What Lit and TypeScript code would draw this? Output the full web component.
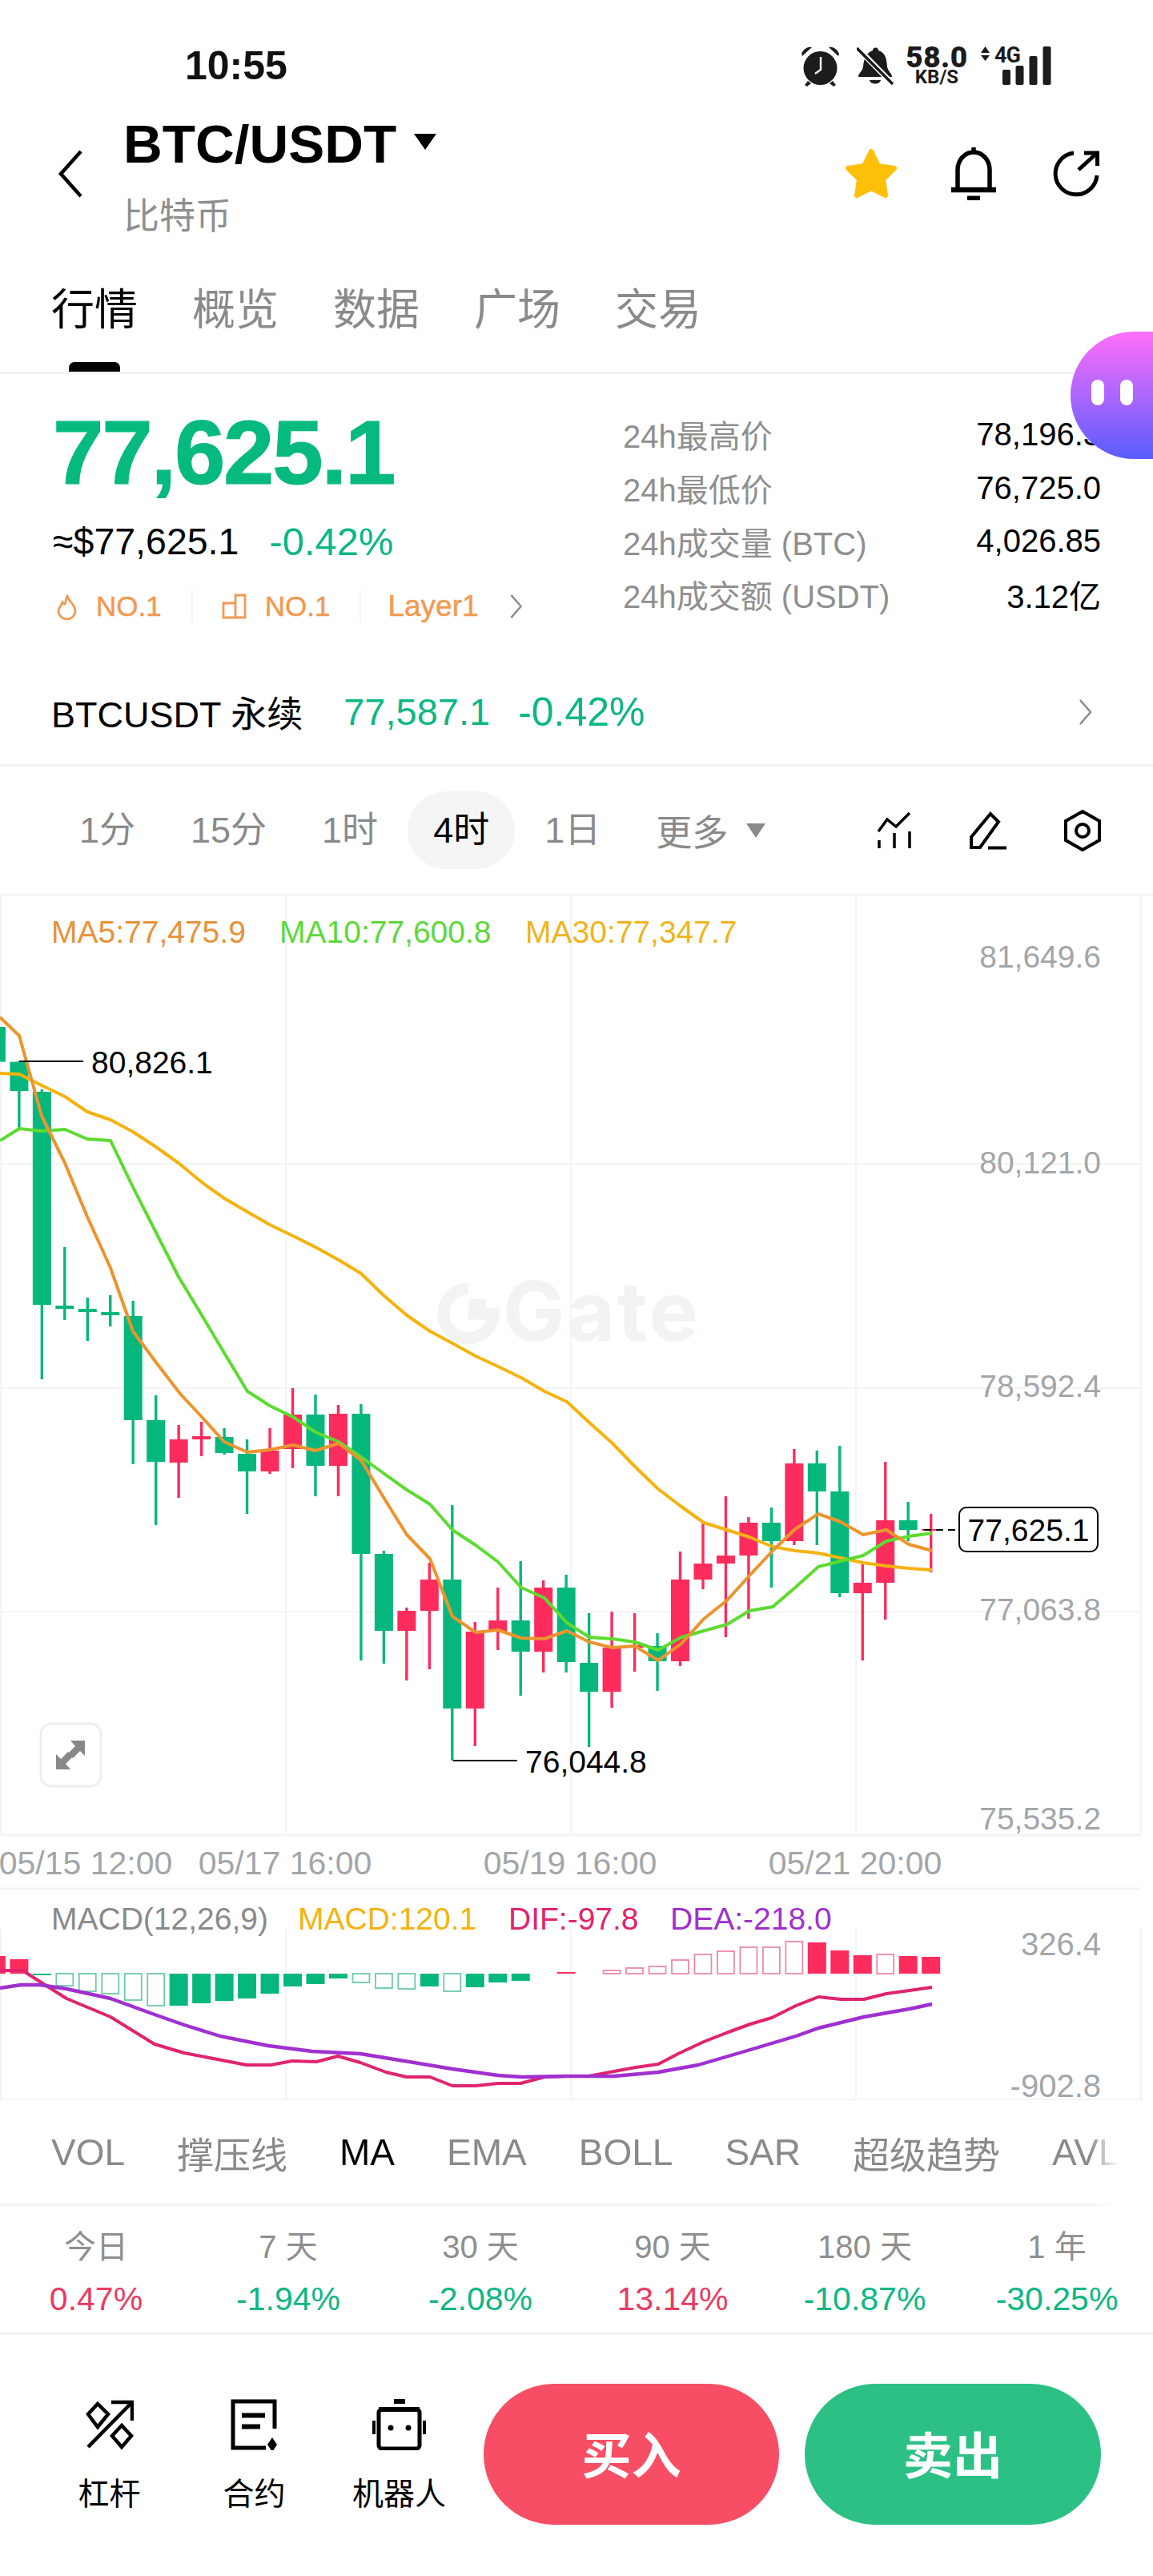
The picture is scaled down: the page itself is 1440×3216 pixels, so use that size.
import { LitElement, html, svg, css } from "lit";
import { customElement } from "lit/decorators.js";

type C = [number, number, number, number, "g" | "r"];
// wick top, wick bottom, body top, body bottom, colour
const CANDLES: C[] = [
  [1270, 1340, 1282, 1325.6, "g"], [1325, 1408, 1325.6, 1362, "g"], [1360, 1722, 1363, 1629, "g"],
  [1557, 1648, 1630, 1634, "g"], [1620, 1674, 1634, 1638, "g"], [1617, 1656, 1638, 1642, "g"],
  [1624, 1828, 1643, 1773, "g"], [1742, 1904, 1773, 1825, "g"], [1779, 1870, 1797, 1826, "r"],
  [1775, 1818, 1793, 1797, "r"], [1783, 1816, 1794, 1814, "g"], [1797, 1890, 1815, 1837, "g"],
  [1783, 1840, 1811, 1837, "r"], [1733, 1833, 1766, 1809, "r"], [1741, 1868, 1766, 1830, "g"],
  [1754, 1868, 1765, 1830, "r"], [1753, 2073, 1765, 1940, "g"], [1936, 2077, 1940, 2036, "g"],
  [2007, 2098, 2011, 2036, "r"], [1951, 2084, 1972, 2011, "r"], [1879, 2198, 1972, 2133, "g"],
  [2025, 2180, 2037, 2133, "r"], [1982, 2060, 2023, 2037, "r"], [1949, 2117, 2023, 2062, "g"],
  [1973, 2088, 1982, 2062, "r"], [1966, 2088, 1982, 2075, "g"], [2014, 2181, 2076, 2112, "g"],
  [2012, 2132, 2057, 2112, "r"], [2014, 2087, 2054, 2057, "r"], [2039, 2111, 2055, 2074, "g"],
  [1937, 2080, 1972, 2074, "r"], [1902, 1984, 1952, 1972, "r"], [1868, 2044, 1942, 1952, "r"],
  [1894, 2021, 1901, 1942, "r"], [1882, 1982, 1901, 1924, "g"], [1809, 1929, 1827, 1924, "r"],
  [1811, 1929, 1827, 1862, "g"], [1805, 1994, 1862, 1989, "g"], [1953, 2073, 1976, 1989, "r"],
  [1825, 2022, 1898, 1976, "r"], [1875, 1924, 1898, 1910, "g"], [1890, 1963, 1909, 1911, "r"],
];
const cx = (i: number) => -4.6 + 28.47 * i;

const MA5 = "0,1270 24,1293 52,1393 81,1452 109,1519 138,1583 166,1662 195,1701 225,1740 252,1769 280,1800 309,1813 337,1810 366,1804 394,1811 423,1802 451,1823 480,1871 508,1916 537,1946 565,2018 594,2038 622,2035 651,2045 680,2046 708,2036 736,2050 765,2057 793,2055 822,2073 851,2052 879,2021 908,1998 936,1967 965,1936 993,1909 1022,1890 1050,1900 1078,1916 1107,1910 1135,1928 1164,1936";
const MA10 = "0,1424 24,1409 52,1412 81,1410 109,1422 138,1424 166,1482 195,1539 223,1594 252,1642 280,1689 309,1737 337,1755 366,1769 394,1788 423,1800 451,1819 480,1840 508,1860 537,1878 565,1910 594,1929 622,1950 651,1982 680,1995 708,2026 736,2044 765,2046 793,2050 822,2060 851,2044 879,2036 908,2028 936,2011 965,2006 993,1982 1022,1956 1050,1949 1078,1942 1107,1924 1135,1918 1164,1914";
const MA30 = "0,1340 24,1341 52,1355 81,1369 109,1388 138,1398 166,1413 195,1432 223,1452 252,1476 280,1496 309,1513 337,1529 366,1543 394,1557 423,1573 451,1590 480,1618 508,1642 537,1662 565,1677 594,1693 622,1706 651,1720 680,1737 708,1750 736,1776 765,1802 793,1831 822,1859 851,1881 879,1901 908,1910 936,1919 965,1931 993,1936 1022,1939 1050,1945 1078,1951 1107,1955 1135,1958 1164,1960";
const DIF = "0,2460 28,2460 83,2495 138,2518 193,2552 230,2563 308,2578 338,2578 365,2573 395,2574 422,2567 450,2575 482,2587 508,2593 537,2593 565,2604 594,2604 622,2601 650,2601 680,2593 707,2592 735,2592 767,2586 794,2581 822,2577 849,2563 879,2549 907,2538 937,2527 964,2519 994,2504 1022,2493 1050,2496 1079,2496 1107,2489 1136,2485 1164,2481";
const DEA = "0,2482 26,2478 50,2478 83,2483 138,2495 193,2515 230,2528 275,2542 335,2554 390,2561 450,2564 505,2573 565,2583 622,2591 652,2593 707,2592 767,2592 822,2587 872,2578 937,2559 994,2542 1022,2532 1079,2518 1136,2508 1164,2502";

// index, end y (from baseline 2464), hollow
const BARS: [number, number, boolean][] = [
  [0, 2442, false], [1, 2446, false], [2, 2466, false], [3, 2479, true], [4, 2486, true], [5, 2489, true],
  [6, 2497, true], [7, 2504, true], [8, 2504, false], [9, 2501, false], [10, 2498, false], [11, 2495, false],
  [12, 2489, false], [13, 2480, false], [14, 2477, false], [15, 2470, false], [16, 2475, true], [17, 2482, true],
  [18, 2483, true], [19, 2480, false], [20, 2486, true], [21, 2481, false], [22, 2475, false], [23, 2473, false],
  [25, 2462, false], [27, 2460, true], [28, 2457, true], [29, 2455, true], [30, 2447, true], [31, 2440, true],
  [32, 2436, true], [33, 2431, true], [34, 2431, true], [35, 2424, true], [36, 2425, false], [37, 2435, false],
  [38, 2441, false], [39, 2440, true], [40, 2442, false], [41, 2443, false],
];

const STATS = [
  ["24h最高价", "78,196.3"], ["24h最低价", "76,725.0"],
  ["24h成交量 (BTC)", "4,026.85"], ["24h成交额 (USDT)", "3.12亿"],
];
const PERIODS: [string, string, boolean][] = [
  ["今日", "0.47%", true], ["7 天", "-1.94%", false], ["30 天", "-2.08%", false],
  ["90 天", "13.14%", true], ["180 天", "-10.87%", false], ["1 年", "-30.25%", false],
];

@customElement("app-root")
export class AppRoot extends LitElement {
  static styles = css`
    :host { display: block; width: 1440px; height: 3216px; background: #fff; overflow: hidden; position: relative;
      font-family: "Liberation Sans", "Noto Sans CJK SC", sans-serif; color: #000; }
    svg { display: block; flex: none; }
    .status { height: 130px; display: flex; padding: 58px 127px 0 231px; box-sizing: border-box; color: #1c1c1c; }
    .time { font-size: 50px; font-weight: 700; line-height: 48px; color: #111; }
    .st-right { margin-left: auto; display: flex; align-items: flex-start; }
    .speed { margin-left: 15px; width: 78px; display: flex; flex-direction: column; align-items: center; font-family: Roboto, sans-serif; font-weight: 700; }
    .speed b { font-size: 37px; line-height: 27px; letter-spacing: .5px; }
    .speed i { font-style: normal; font-size: 24px; line-height: 20px; margin-top: 1px; }
    .net { margin-left: 15px; }
    .net-label { font-family: Roboto, sans-serif; font-weight: 700; font-size: 27px; letter-spacing: -1px; fill: #1c1c1c; }

    .header { height: 173px; display: flex; align-items: center; box-sizing: border-box; }
    .back { margin-left: 72px; }
    .titles { margin-left: 51px; display: flex; flex-direction: column; padding-top: 13px; }
    .title-row { display: flex; align-items: center; height: 70px; }
    .title { font-size: 67.5px; line-height: 70px; font-weight: 700; }
    .caret { margin-left: 22px; margin-top: -6px; }
    .sub { font-size: 45px; line-height: 60px; color: #8e8e8e; margin-top: 26px; }
    .head-icons { margin-left: auto; display: flex; align-items: center; padding-right: 67px; }
    .head-icons svg:nth-child(2) { margin-left: 66px; }
    .head-icons svg:nth-child(3) { margin-left: 71px; }

    .tabs { height: 164px; box-sizing: border-box; border-bottom: 3px solid #f3f3f3; padding: 54px 0 0 64px; display: flex; gap: 68px; align-items: flex-start; }
    .tab { font-size: 54px; line-height: 60px; color: #8a8a8a; display: flex; flex-direction: column; align-items: center; width: 108px; }
    .tab.on { color: #000; }
    .tab.on::after { content: ""; width: 64px; height: 12px; margin-top: 35px; background: #000; border-radius: 7px 7px 0 0; }

    .summary { height: 363px; display: grid; grid-template-columns: 712px 1fr; padding: 38px 65px 0 66px; box-sizing: border-box; }
    .price { font-size: 114px; line-height: 120px; font-weight: 700; color: #06b97e; letter-spacing: -2.2px; white-space: nowrap; -webkit-text-stroke: 1.2px #06b97e; }
    .fiat { display: flex; font-size: 46.5px; line-height: 56px; margin-top: 23px; }
    .fiat span { color: #0db783; margin-left: 38px; font-size: 49px; }
    .tags { display: flex; align-items: center; height: 50px; margin-top: 28px; font-size: 35px; color: #f29a52; -webkit-text-stroke: .5px #f29a52; }
    .tags .sep { width: 2px; height: 42px; background: #f7f4f1; margin: 0 36px 0 37px; }
    .tags .t { display: flex; align-items: center; gap: 23px; }
    .tags .t:first-child { margin-left: 4px; }
    .tags .lay { font-size: 37px; margin-left: -3px; }
    .stats { padding-top: 4px; display: flex; flex-direction: column; }
    .stat { display: flex; justify-content: space-between; align-items: center; height: 66.7px; font-size: 40px; }
    .stat span { color: #8f8f8f; }
    .perp { height: 127px; box-sizing: border-box; border-bottom: 3px solid #f3f3f3; padding: 0 76px 7px 64px; display: flex; align-items: center; font-size: 45px; }
    .perp .p { color: #0db783; font-size: 47px; margin-left: 51px; }
    .perp .q { color: #0db783; font-size: 50px; margin-left: 35px; }
    .perp svg { margin-left: auto; }

    .tf { height: 161px; box-sizing: border-box; border-bottom: 2px solid #f3f3f3; display: flex; align-items: center; padding: 0 65px 0 99px; font-size: 45px; color: #8a8a8a; }
    .tf-list { display: flex; gap: 69px; align-items: center; }
    .tf-i { height: 97px; line-height: 97px; padding: 0 32px; margin: 0 -32px; border-radius: 49px; white-space: nowrap; }
    .tf-i.on { background: #f5f5f5; color: #000; }
    .more { display: flex; align-items: center; gap: 23px; }
    .tf-icons { margin-left: auto; display: flex; align-items: center; gap: 71px; }

    .chart { height: 1504px; }
    .lg { font-size: 39px; }
    .ax { font-size: 39px; fill: #a3a6aa; text-anchor: end; }
    .mx { font-size: 40px; fill: #a3a6aa; text-anchor: end; }
    .dt { font-size: 41px; fill: #a3a6aa; text-anchor: middle; }
    .an { font-size: 39px; fill: #000; }
    .wm { font-family: Inter, "Liberation Sans", sans-serif; font-size: 103px; font-weight: 700; fill: #f1f3f4; letter-spacing: 3px; }

    .ind { height: 132px; box-sizing: border-box; border-bottom: 3px solid #f3f3f3; display: flex; align-items: center; gap: 65px; padding: 0 0 0 64px; font-size: 46px; color: #8a8a8a; white-space: nowrap; overflow: hidden;
      -webkit-mask-image: linear-gradient(to right, #000 1360px, transparent 1396px); mask-image: linear-gradient(to right, #000 1360px, transparent 1396px); }
    .ind .on { color: #000; }

    .periods { height: 161px; box-sizing: border-box; border-bottom: 3px solid #f3f3f3; display: grid; grid-template-columns: repeat(6, 240px); padding-top: 26px; }
    .per { display: flex; flex-direction: column; align-items: center; font-size: 40px; line-height: 50px; }
    .per span { color: #8f8f8f; }
    .per b { font-weight: 400; margin-top: 15px; font-size: 41px; }
    .up { color: #ea3a62; }
    .dn { color: #0db783; }

    .bottom { display: flex; padding: 61px 65px 0 46px; align-items: flex-start; }
    .act { width: 181px; display: flex; flex-direction: column; align-items: center; padding-top: 19px; }
    .act svg { height: 64px; }
    .act span { font-size: 39px; line-height: 50px; margin-top: 30px; }
    .btn { height: 176px; width: 369px; border-radius: 88px; color: #fff; font-size: 62px; font-weight: 700; display: flex; align-items: center; justify-content: center; padding-bottom: 4px; box-sizing: border-box; }
    .buy { background: #f74e65; margin-left: 15px; }
    .sell { background: #2cc085; margin-left: 32px; width: 370px; }

    .float { position: absolute; right: 0; top: 414px; width: 103px; height: 159px; border-radius: 80px 0 0 80px; background: linear-gradient(#ff6ffb, #5a5cff); display: flex; gap: 20px; padding: 60px 0 0 26px; box-sizing: border-box; }
    .float i { width: 16px; height: 32px; background: #fff; border-radius: 8px; }
  `;

  private chart() {
    const verts = [0, 356, 712, 1068, 1424];
    const G = "#05b77c", R = "#fc2c5c";
    return html`<svg class="chart" width="1440" height="1504" viewBox="0 1118 1440 1504" role="img">
      ${verts.map(v => svg`<line x1=${v + 1} x2=${v + 1} y1="1118" y2="2291" stroke="#f3f4f5" stroke-width="2"/>
        <line x1=${v + 1} x2=${v + 1} y1="2408" y2="2622" stroke="#f3f4f5" stroke-width="2"/>`)}
      ${[1453, 1733, 2012].map(h => svg`<line x1="0" x2="1424" y1=${h} y2=${h} stroke="#f3f4f5" stroke-width="2"/>`)}
      ${[2291, 2358, 2622].map(h => svg`<line x1="0" x2="1424" y1=${h} y2=${h} stroke="#f3f3f3" stroke-width="3"/>`)}

      <path d="M585 1609A31 31 0 1 0 616 1640H585" fill="none" stroke="#f1f3f4" stroke-width="15"/>
      <rect x="586" y="1622" width="21" height="18" fill="#f1f3f4"/>
      <text class="wm" x="628" y="1674">Gate</text>

      ${CANDLES.map((c, i) => {
        const col = c[4] === "g" ? G : R;
        const x = cx(i);
        return svg`<line x1=${x} x2=${x} y1=${c[0]} y2=${c[1]} stroke=${col} stroke-width="3.4"/>
          <rect x=${x - 11.5} y=${c[2]} width="23" height=${c[3] - c[2]} fill=${col}/>`;
      })}
      <polyline points=${MA30} fill="none" stroke="#f5b310" stroke-width="4" stroke-linejoin="round"/>
      <polyline points=${MA10} fill="none" stroke="#5cdb30" stroke-width="4" stroke-linejoin="round"/>
      <polyline points=${MA5} fill="none" stroke="#ec942d" stroke-width="4" stroke-linejoin="round"/>

      <text class="lg" x="64" y="1177" fill="#e8913a">MA5:77,475.9</text>
      <text class="lg" x="349" y="1177" fill="#5cd93a">MA10:77,600.8</text>
      <text class="lg" x="656" y="1177" fill="#f0b41c">MA30:77,347.7</text>

      <text class="ax" x="1375" y="1208">81,649.6</text>
      <text class="ax" x="1375" y="1465">80,121.0</text>
      <text class="ax" x="1375" y="1744">78,592.4</text>
      <text class="ax" x="1375" y="2023">77,063.8</text>
      <text class="ax" x="1375" y="2284">75,535.2</text>

      <line x1="24" x2="104" y1="1325" y2="1325" stroke="#000" stroke-width="2"/>
      <text class="an" x="114" y="1340">80,826.1</text>
      <line x1="566" x2="646" y1="2198" y2="2198" stroke="#000" stroke-width="2"/>
      <text class="an" x="656" y="2213">76,044.8</text>

      <line x1="1154" x2="1198" y1="1910" y2="1910" stroke="#000" stroke-width="2" stroke-dasharray="9 6"/>
      <rect x="1198" y="1882" width="173" height="55" rx="9" fill="#fff" stroke="#000" stroke-width="2"/>
      <text class="an" x="1284.5" y="1924" text-anchor="middle">77,625.1</text>

      <rect x="51" y="2152" width="75" height="78" rx="13" fill="#fff" stroke="#efefef" stroke-width="3"/>
      <path d="M106 2173V2192L100 2186L91 2195L85 2189L94 2180L88 2173ZM70 2209V2190L76 2196L85 2187L91 2193L82 2202L88 2209Z" fill="#888"/>

      <text class="dt" x="107" y="2340">05/15 12:00</text>
      <text class="dt" x="356" y="2340">05/17 16:00</text>
      <text class="dt" x="712" y="2340">05/19 16:00</text>
      <text class="dt" x="1068" y="2340">05/21 20:00</text>

      <text class="lg" x="64" y="2409" fill="#8a8a8a">MACD(12,26,9)</text>
      <text class="lg" x="372" y="2409" fill="#f5b310">MACD:120.1</text>
      <text class="lg" x="635" y="2409" fill="#e0246e">DIF:-97.8</text>
      <text class="lg" x="837" y="2409" fill="#a030d0">DEA:-218.0</text>
      <text class="mx" x="1375" y="2441">326.4</text>
      <text class="mx" x="1375" y="2618">-902.8</text>

      ${BARS.map(([i, y, hollow]) => {
        const down = y > 2464;
        const top = down ? 2464 : y, h = Math.abs(y - 2464);
        const col = down ? G : R;
        const faint = down ? "#6cc9ab" : "#ec8ba4";
        return hollow
          ? svg`<rect x=${cx(i) - 10.5} y=${top} width="21" height=${h} fill="#fff" stroke=${faint} stroke-width="1.8"/>`
          : svg`<rect x=${cx(i) - 11.5} y=${top} width="23" height=${h} fill=${col}/>`;
      })}
      <polyline points=${DIF} fill="none" stroke="#e0246e" stroke-width="4" stroke-linejoin="round"/>
      <polyline points=${DEA} fill="none" stroke="#a030d0" stroke-width="4.400" stroke-linejoin="round"/>
    </svg>`;
  }

  render() {
    const chevSmall = html`<svg width="17" height="34" viewBox="0 0 17 34"><path d="M2 2L15 17L2 32" fill="none" stroke="#8a8a8a" stroke-width="2.5"/></svg>`;
    return html`
      <div class="status">
        <div class="time">10:55</div>
        <div class="st-right">
          <svg width="49" height="50" viewBox="0 0 49 50" fill="#1c1c1c">
            <circle cx="24.5" cy="27" r="21"/>
            <path d="M1 9C4 2 10 0 14 1L2 12ZM48 9C45 2 39 0 35 1L47 12Z"/>
            <path d="M9 43L5 48L8 50L13 46ZM40 43L44 48L41 50L36 46Z"/>
            <path d="M25 13V29L18 34" fill="none" stroke="#fff" stroke-width="2.4"/>
          </svg>
          <svg style="margin-left:21px;margin-top:1px" width="46" height="47" viewBox="0 0 46 47">
            <path d="M20 4a3.500 3.500 0 0 1 7 0C36 7 37 14 38 24C39 31 44 32 44 37H2C2 32 7 31 8 24C9 14 12 7 20 4Z" fill="#1c1c1c"/>
            <path d="M16 41H30C29 47 17 47 16 41Z" fill="#1c1c1c"/>
            <path d="M0 0L46 47" stroke="#fff" stroke-width="7"/>
            <path d="M0 1L45 46" stroke="#1c1c1c" stroke-width="3.500"/>
          </svg>
          <div class="speed"><b>58.0</b><i>KB/S</i></div>
          <svg class="net" width="89" height="48" viewBox="0 0 89 48">
            <path d="M1 8L6.500 0L12 8ZM1 11L6.500 18L12 11Z" fill="#1c1c1c"/>
            <text class="net-label" x="18" y="20">4G</text>
            <rect x="28" y="29" width="10" height="19" rx="2" fill="#1c1c1c"/>
            <rect x="44.500" y="24" width="10" height="24" rx="2" fill="#1c1c1c"/>
            <rect x="61.500" y="12" width="10" height="36" rx="2" fill="#1c1c1c"/>
            <rect x="78.500" y="0" width="10" height="48" rx="2" fill="#1c1c1c"/>
          </svg>
        </div>
      </div>

      <div class="header">
        <svg class="back" width="31" height="60" viewBox="0 0 31 60"><path d="M29 2L4 30L29 58" fill="none" stroke="#000" stroke-width="4.500"/></svg>
        <div class="titles">
          <div class="title-row"><span class="title">BTC/USDT</span>
            <svg class="caret" width="28" height="20" viewBox="0 0 28 20"><path d="M0 0H28L14 20Z" fill="#000"/></svg></div>
          <div class="sub">比特币</div>
        </div>
        <div class="head-icons">
          <svg width="68" height="64" viewBox="0 0 68 64"><path d="M34 4L43 22L63 25L49 39L52 59L34 50L16 59L19 39L5 25L25 22Z" fill="#fdbf07" stroke="#fdbf07" stroke-width="6" stroke-linejoin="round"/></svg>
          <svg width="56" height="66" viewBox="0 0 56 66" fill="none" stroke="#000" stroke-width="5.500">
            <path d="M28 0V6"/><path d="M8 53V28A20 22 0 0 1 48 28V53"/><path d="M0 53H56" stroke-width="6.500"/><path d="M20 63.500H36" stroke-width="6"/>
          </svg>
          <svg width="58" height="58" viewBox="0 0 58 58" fill="none" stroke="#000" stroke-width="5">
            <path d="M26 3A26 26 0 1 0 55 31"/><path d="M32 24L54 4"/><path d="M39 3H55.500V19"/>
          </svg>
        </div>
      </div>

      <div class="tabs">
        <div class="tab on">行情</div><div class="tab">概览</div><div class="tab">数据</div><div class="tab">广场</div><div class="tab">交易</div>
      </div>

      <div class="summary">
        <div>
          <div class="price">77,625.1</div>
          <div class="fiat">≈$77,625.1<span>-0.42%</span></div>
          <div class="tags">
            <div class="t">
              <svg width="27" height="33" viewBox="0 0 27 33"><path d="M14 2C14 9 24 13 24 22A10.500 10 0 0 1 3 22C3 17 7 15 8 11C10 14 11 14 11.500 12C12.500 9 13 5 14 2Z" fill="none" stroke="#f29a52" stroke-width="2.800"/></svg>
              NO.1</div>
            <div class="sep"></div>
            <div class="t">
              <svg width="31" height="32" viewBox="0 0 31 32"><path d="M2 12H17V30H2ZM17 2H29V30H17Z" fill="none" stroke="#f29a52" stroke-width="2.800"/></svg>
              NO.1</div>
            <div class="sep"></div>
            <div class="lay">Layer1</div>
            <svg style="margin-left:38px" width="17" height="32" viewBox="0 0 17 34"><path d="M2 2L15 17L2 32" fill="none" stroke="#8a8a8a" stroke-width="2.500"/></svg>
          </div>
        </div>
        <div class="stats">
          ${STATS.map(s => html`<div class="stat"><span>${s[0]}</span>${s[1]}</div>`)}
        </div>
      </div>

      <div class="perp">BTCUSDT 永续<span class="p">77,587.1</span><span class="q">-0.42%</span>${chevSmall}</div>

      <div class="tf">
        <div class="tf-list">
          <div class="tf-i">1分</div><div class="tf-i">15分</div><div class="tf-i">1时</div>
          <div class="tf-i on">4时</div><div class="tf-i">1日</div>
          <div class="more">更多<svg width="24" height="18" viewBox="0 0 24 18"><path d="M0 0H24L12 18Z" fill="#8a8a8a"/></svg></div>
        </div>
        <div class="tf-icons">
          <svg width="44" height="46" viewBox="0 0 44 46" fill="none" stroke="#000" stroke-width="3.500">
            <path d="M2 24L13 9L24 18L41 1"/><path d="M3 35V45M22 26V45M41 24V45"/>
          </svg>
          <svg width="48" height="48" viewBox="0 0 48 48" fill="none" stroke="#000" stroke-width="4">
            <path d="M3 45V32L27 3L37 13L14 45Z"/><path d="M24 45.500H47"/>
          </svg>
          <svg width="46" height="52" viewBox="0 0 46 52" fill="none" stroke="#000" stroke-width="4">
            <path d="M23 2L44 14V38L23 50L2 38V14Z"/><circle cx="23" cy="26" r="8"/>
          </svg>
        </div>
      </div>

      ${this.chart()}

      <div class="ind">
        <span>VOL</span><span>撑压线</span><span class="on">MA</span><span>EMA</span><span>BOLL</span><span>SAR</span><span>超级趋势</span><span>AVL</span>
      </div>

      <div class="periods">
        ${PERIODS.map(p => html`<div class="per"><span>${p[0]}</span><b class=${p[2] ? "up" : "dn"}>${p[1]}</b></div>`)}
      </div>

      <div class="bottom">
        <div class="act">
          <svg width="60" height="64" viewBox="0 0 60 64" fill="none" stroke="#000" stroke-width="4.500">
            <path d="M3 60L57 5M32 4H58V27"/><path d="M15 6L28 19L15 35L3 19Z"/><path d="M45 33L57 46L45 60L33 46Z"/>
          </svg>
          <span>杠杆</span>
        </div>
        <div class="act">
          <svg width="60" height="64" viewBox="0 0 60 64" fill="none" stroke="#000" stroke-width="5">
            <path d="M55 37V3H3V61H44"/><path d="M14 20.500H43M14 34.500H37" stroke-width="6"/>
            <path d="M52 48L58 57L52 66L46 57Z" fill="#000" stroke="none"/>
          </svg>
          <span>合约</span>
        </div>
        <div class="act">
          <svg width="67" height="64" viewBox="0 0 67 64" fill="none" stroke="#000" stroke-width="5">
            <rect x="8" y="13" width="51" height="49" rx="4"/><path d="M8 13H59" stroke-width="6"/>
            <path d="M27 3H41" stroke-width="6"/><path d="M2 27V44M65 27V44" stroke-width="4"/>
            <circle cx="23" cy="36" r="3.500" fill="#000" stroke="none"/><circle cx="45" cy="36" r="3.500" fill="#000" stroke="none"/>
          </svg>
          <span>机器人</span>
        </div>
        <div class="btn buy">买入</div>
        <div class="btn sell">卖出</div>
      </div>

      <div class="float"><i></i><i></i></div>
    `;
  }
}
